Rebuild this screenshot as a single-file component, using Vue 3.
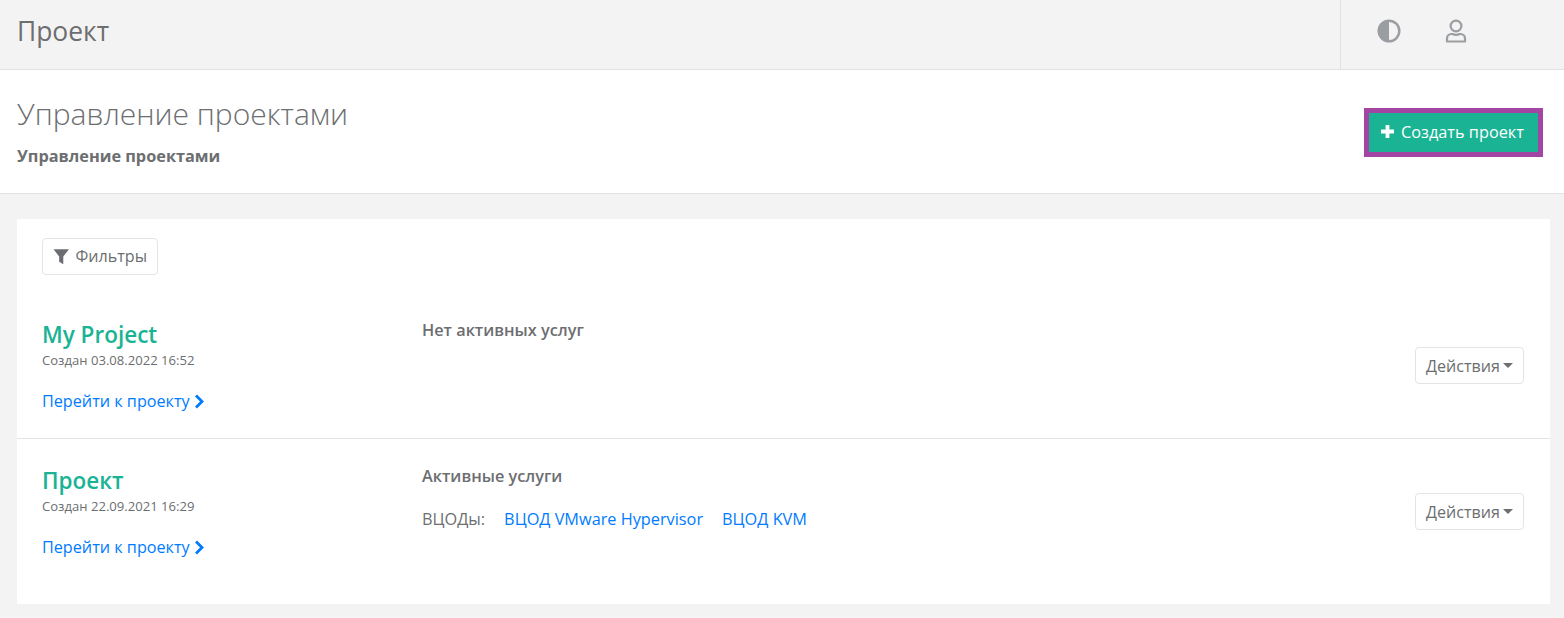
<script setup>
const projects = [
  { name: 'My Project', date: 'Создан 03.08.2022 16:52', active: false },
  { name: 'Проект', date: 'Создан 22.09.2021 16:29', active: true },
]
</script>

<template>
  <div class="page">
    <header class="topbar">
      <div class="topbar-title">Проект</div>
      <div class="topbar-icons">
        <svg width="24" height="24" viewBox="0 0 24 24">
          <circle cx="12" cy="12" r="10.300" fill="none" stroke="#9a9da2" stroke-width="2.400" />
          <path d="M12 2a10 10 0 0 0 0 20z" fill="#9a9da2" />
        </svg>
        <svg width="24" height="24" viewBox="0 0 24 24" fill="none" stroke="#9a9da2" stroke-width="2.200">
          <circle cx="12" cy="7" r="5.400" />
          <path d="M3 22.500v-3c0-2.600 2-4.500 4.500-4.500h1c1 .5 2.200.8 3.500.8s2.500-.3 3.500-.8h1c2.500 0 4.500 1.900 4.500 4.500v3z" stroke-linejoin="round" />
        </svg>
      </div>
    </header>

    <section class="pagehead">
      <div>
        <h1>Управление проектами</h1>
        <div class="crumb">Управление проектами</div>
      </div>
      <button class="create">
        <svg width="15" height="15" viewBox="0 0 15 15"><path d="M7.500 1v13M1 7.500h13" stroke="#fff" stroke-width="3.800" /></svg>
        Создать проект
      </button>
    </section>

    <main class="content">
      <div class="card">
        <div class="filters-row">
          <button class="btn">
            <svg width="17" height="17" viewBox="0 0 16 16"><path d="M.500 1h15L10 8v7.500L6 13V8z" fill="#6b6d70" /></svg>
            <span class="btn-label">Фильтры</span>
          </button>
        </div>
        <div v-for="p in projects" :key="p.name" class="row">
          <div class="col-a">
            <div class="name">{{ p.name }}</div>
            <div class="date">{{ p.date }}</div>
            <a class="go">Перейти к проекту
              <svg width="10" height="15" viewBox="0 0 10 15"><path d="M2 1.500 8 7.500 2 13.500" fill="none" stroke="#007bff" stroke-width="2.800" /></svg>
            </a>
          </div>
          <div class="col-b">
            <template v-if="p.active">
              <div class="svc-title">Активные услуги</div>
              <div class="svc-line">
                <span class="svc-label">ВЦОДы:</span>
                <a>ВЦОД VMware Hypervisor</a>
                <a>ВЦОД KVM</a>
              </div>
            </template>
            <div v-else class="svc-title">Нет активных услуг</div>
          </div>
          <button class="btn actions">Действия<span class="caret"></span></button>
        </div>
      </div>
    </main>
  </div>
</template>

<style>
html, body { margin: 0; background: #f2f2f2; }
</style>

<style scoped>
.page {
  width: 1564px;
  height: 618px;
  overflow: hidden;
  background: #f3f3f3;
  font-family: "Open Sans", sans-serif;
  color: #6c6e70;
  font-size: 16.2px;
}
.topbar {
  height: 69px;
  border-bottom: 1px solid #e2e2e2;
  display: flex;
  align-items: center;
  justify-content: space-between;
  box-sizing: content-box;
}
.topbar-title { padding-left: 17px; padding-bottom: 8px; font-size: 26.400px; line-height: 32px; color: #6c6e70; }
.topbar-icons {
  width: 224px;
  height: 69px;
  border-left: 1px solid #e2e2e2;
  display: flex;
  align-items: center;
  padding-left: 36px;
  padding-bottom: 8px;
  gap: 43px;
  box-sizing: border-box;
}
.pagehead {
  height: 123px;
  background: #fff;
  border-bottom: 1px solid #e2e2e2;
  display: flex;
  justify-content: space-between;
  padding: 0 21px 0 17px;
  box-sizing: content-box;
}
.pagehead h1 {
  margin: 24px 0 0;
  font-size: 30px;
  line-height: 40px;
  font-weight: 300;
  color: #6c6e70;
}
.crumb { margin-top: 12px; font-size: 16.300px; line-height: 20px; font-weight: 700; color: #6c6e70; }
.create {
  margin-top: 38px;
  width: 179px;
  height: 49px;
  border: 5px solid #a346a3;
  background: #1ab394;
  color: #fff;
  font: 400 16.300px "Open Sans", sans-serif;
  display: flex;
  align-items: center;
  justify-content: center;
  gap: 6px;
  padding: 0 3px 2px 0;
  box-sizing: border-box;
}
.content { padding: 25px 14px 0 17px; }
.card { background: #fff; height: 385px; }
.filters-row { padding: 19px 25px 0; height: 68px; box-sizing: border-box; }
.btn {
  height: 37px;
  border: 1px solid #e4e4e4;
  border-radius: 4px;
  background: #fff;
  color: #6c6e70;
  font: 400 16.100px "Open Sans", sans-serif;
  display: inline-flex;
  align-items: center;
  padding: 0 10px;
  box-sizing: border-box;
}
.filters-row .btn { width: 116px; gap: 6px; }
.btn-label { margin-top: -2px; }
.row {
  height: 151px;
  display: flex;
  align-items: flex-start;
  padding: 0 26px 0 25px;
  box-sizing: border-box;
}
.row + .row { border-top: 1px solid #e4e4e4; height: 166px; }
.col-a { width: 380px; padding-top: 31px; }
.row + .row .col-a { padding-top: 25px; }
.name { font-size: 22.500px; line-height: 33px; font-weight: 600; color: #1ab394; }
.date { font-size: 13.100px; line-height: 18px; }
.go { display: inline-flex; align-items: center; gap: 4px; margin-top: 21px; color: #007bff; line-height: 22px; }
.col-b { flex: 1; padding-top: 32px; }
.row + .row .col-b { padding-top: 26px; }
.svc-title { font-size: 16.300px; line-height: 22px; font-weight: 600; }
.svc-line { margin-top: 21px; display: flex; gap: 19px; line-height: 22px; font-size: 16.300px; }
.svc-line a { color: #007bff; }
.actions { margin-top: 60px; width: 109px; gap: 3px; }
.row + .row .actions { margin-top: 54px; }
.caret {
  width: 0;
  height: 0;
  border-left: 5px solid transparent;
  border-right: 5px solid transparent;
  border-top: 5px solid #6c6e70;
}
</style>
